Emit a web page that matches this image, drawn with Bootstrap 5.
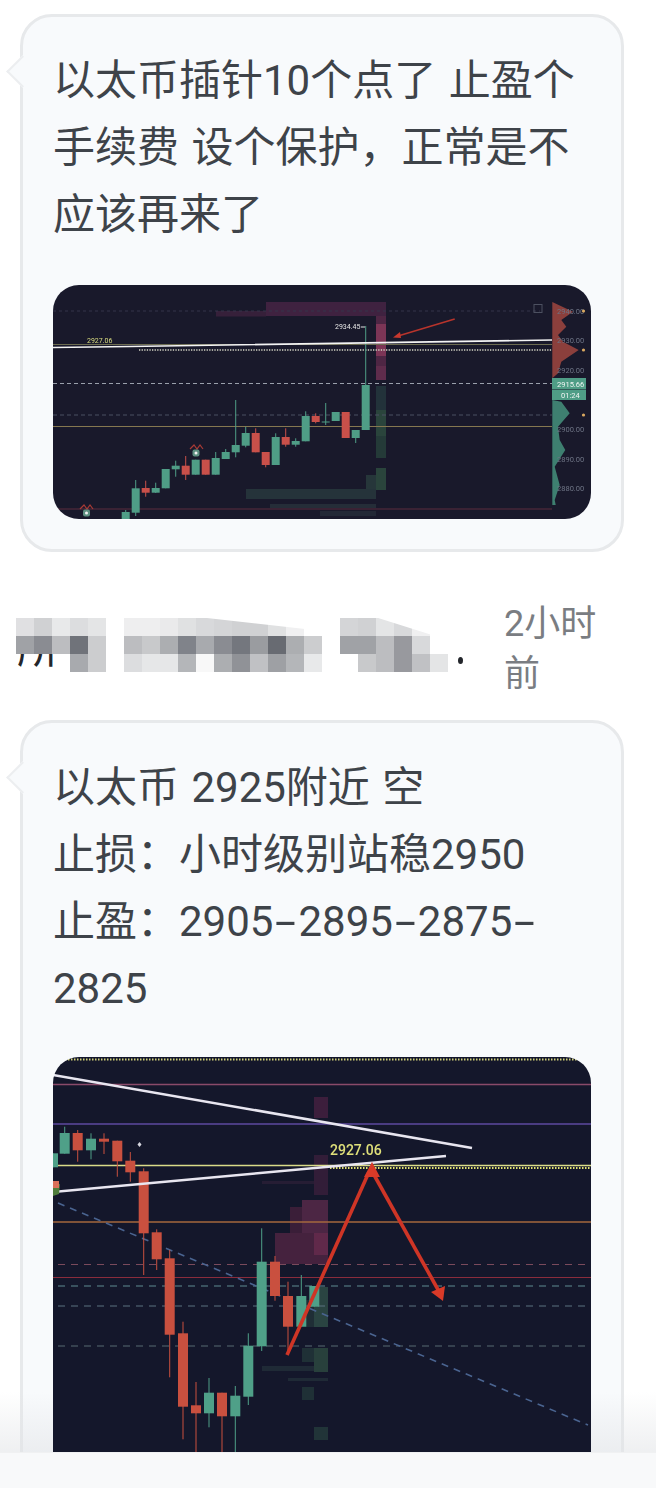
<!DOCTYPE html>
<html lang="zh-CN">

<head>
    <meta charset="UTF-8">
    <meta name="viewport" content="width=device-width, initial-scale=1.0">
    <title>以太币</title>
    <link href="https://cdn.jsdelivr.net/npm/bootstrap@5.3.2/dist/css/bootstrap.min.css" rel="stylesheet">
    <style>
        html,
        body {
            height: 1488px;
            overflow: hidden;
        }

        body {
            background-color: #fff;
            font-family: Roboto, "Noto Sans CJK SC", sans-serif;
        }

        .msg-bubble {
            position: relative;
            width: 604px;
            margin-left: 20px;
            background-color: #f8fafc;
            border: 3px solid #e7e9eb;
            border-radius: 32px;
            padding: 30px 30px 30px;
        }

        .msg-bubble::before {
            content: "";
            position: absolute;
            left: -12px;
            top: 43px;
            width: 23px;
            height: 23px;
            background-color: #f8fafc;
            border-left: 2px solid #eceef0;
            border-bottom: 2px solid #eceef0;
            transform: rotate(45deg);
        }

        .msg-text {
            font-size: 42px;
            line-height: 67px;
            word-spacing: 2px;
            color: #3e4349;
            margin-bottom: 37px;
        }

        .wide-dash {
            display: inline-block;
            width: 25px;
            text-align: center;
            transform: scaleX(1.8);
        }

        .chart-box {
            position: relative;
            z-index: 2;
            width: 538px;
            border-radius: 26px;
            overflow: hidden;
        }

        .chart-box svg {
            display: block;
            filter: blur(.4px);
        }

        .chart-box text {
            font-family: Roboto, sans-serif;
        }

        .first-bubble {
            margin-top: 14px;
        }

        .second-bubble {
            margin-top: 21px;
            height: 900px;
            padding-top: 31px;
        }

        .second-bubble .msg-text {
            margin-bottom: 35px;
        }

        .name-row {
            height: 100px;
            margin-top: 47px;
        }

        .name-area {
            position: relative;
            width: 504px;
            height: 100px;
            overflow: hidden;
        }

        .name-text {
            position: absolute;
            left: 17px;
            top: 22px;
            font-size: 42px;
            line-height: 56px;
            color: #23262b;
        }

        .name-dot {
            position: absolute;
            left: 458px;
            top: 58px;
            width: 5px;
            height: 7px;
            border-radius: 50%;
            background-color: #23262b;
        }

        .mosaic {
            position: absolute;
            left: 0;
            top: 0;
        }

        .time-text {
            width: 100px;
            font-size: 36px;
            line-height: 50px;
            color: #7a7d82;
        }

        .bottom-fade {
            position: absolute;
            z-index: 1;
            left: 0;
            right: 0;
            top: 1392px;
            height: 60px;
            background: linear-gradient(rgba(225, 227, 230, 0), rgba(225, 227, 230, .55));
        }

        .bottom-bar {
            position: absolute;
            z-index: 3;
            left: 0;
            right: 0;
            top: 1452px;
            height: 36px;
            background-color: #f8f9fa;
            border-top: 1px solid #f0f1f2;
        }
    </style>
</head>

<body class="position-relative">
    <!-- first post -->
    <div class="msg-bubble first-bubble">
        <div class="msg-text">以太币插针10个点了 止盈个手续费 设个保护，正常是不应该再来了</div>
        <div class="chart-box">
            <svg id="chartOne" width="538" height="234" viewBox="53 285 538 234">
                <rect x="53" y="285" width="538" height="234" fill="#19192b" />
                <!-- heatmap -->
                <g id="heatOne"></g>
                <!-- levels -->
                <line x1="53" x2="540" y1="311" y2="311" stroke="#34344a" stroke-dasharray="3 3" />
                <line x1="53" x2="552" y1="344.5" y2="344.5" stroke="#6d6c52" />
                <line x1="139" x2="552" y1="350" y2="350" stroke="#d5d5c5" stroke-width="1.4" stroke-dasharray="1.3 1.3" />
                <line x1="53" x2="552" y1="383.5" y2="383.5" stroke="#9aa0ac" stroke-dasharray="4 3" />
                <line x1="53" x2="552" y1="415" y2="415" stroke="#4b5162" stroke-dasharray="4 3" />
                <line x1="53" x2="552" y1="426.5" y2="426.5" stroke="#857750" />
                <line x1="53" x2="552" y1="509" y2="509" stroke="#5c2c3e" />
                <g id="candlesOne"></g>
                <!-- trend line -->
                <path d="M53 347.5 L130 346.5 L552 340" fill="none" stroke="#f4f4f4" stroke-width="1.6" />
                <text x="87" y="343" font-size="7" fill="#d9dc80">2927.06</text>
                <text x="335" y="329" font-size="7" fill="#e6e6e6">2934.45</text>
                <line x1="361" x2="365" y1="327" y2="327" stroke="#e6e6e6" />
                <path d="M454.7 319 L398 336" stroke="#b8342c" stroke-width="1.6" />
                <path d="M393 337.5 L400 332 L401 338 Z" fill="#c8382e" />
                <rect x="534" y="304.5" width="8" height="8" fill="none" stroke="#4c5060" />
                <!-- right axis -->
                <path d="M552.3 302 L573 311.7 L561.3 320 L566.3 326.7 L558 335 L563 341.7 L578.7 350 L561.3 361.7 L558 373.3 L552.3 378.3 Z" fill="#8b3f3c" />
                <path d="M552.3 400 L561.3 401.7 L569.7 413.3 L558 426.7 L559.7 440 L565.3 450 L554.7 466.7 L559.7 485 L554.7 500 L555.7 505 L552.3 505 Z" fill="#3e7f70" />
                <g font-size="7.5" fill="#6e7485">
                    <text x="557" y="313.5">2940.00</text>
                    <text x="557" y="343">2930.00</text>
                    <text x="557" y="372.5">2920.00</text>
                    <text x="557" y="432">2900.00</text>
                    <text x="557" y="462">2890.00</text>
                    <text x="557" y="491">2880.00</text>
                </g>
                <rect x="552" y="378" width="34" height="11.5" fill="#4f9d86" />
                <rect x="552" y="390" width="34" height="10" fill="#4f9d86" />
                <text x="557" y="386.5" font-size="7.5" fill="#f0f5f3">2915.66</text>
                <text x="561" y="397.5" font-size="7.5" fill="#f0f5f3">01:24</text>
                <g fill="#d9a860">
                    <circle cx="583.5" cy="311" r="1.6" />
                    <circle cx="583.5" cy="350" r="1.6" />
                    <circle cx="583.5" cy="415" r="1.6" />
                </g>
                <!-- trade markers -->
                <g fill="none" stroke="#a83a35" stroke-width="1.2">
                    <path d="M190 449 L194 445 L197 449 L200 445 L203 449" />
                    <path d="M80 509 L84 505 L87 509 L90 505 L93 509" />
                </g>
                <g>
                    <rect x="192.5" y="449.5" width="7" height="7" rx="2" fill="#5d8f80" />
                    <circle cx="196" cy="453" r="1.5" fill="#f2f2f2" />
                    <rect x="83" y="509.5" width="7" height="7" rx="2" fill="#5d8f80" />
                    <circle cx="86.5" cy="513" r="1.5" fill="#f2f2f2" />
                </g>
            </svg>
        </div>
    </div>

    <!-- author row, name is pixelated in the picture -->
    <div class="d-flex name-row">
        <div class="name-area">
            <span class="name-text">所</span>
            <span class="name-dot"></span>
            <svg id="mosaic" class="mosaic" width="504" height="100" viewBox="0 596 504 100"></svg>
        </div>
        <div class="time-text">2小时前</div>
    </div>

    <!-- second post -->
    <div class="msg-bubble second-bubble">
        <div class="msg-text">以太币 2925附近 空<br>止损：小时级别站稳2950<br>止盈：2905<span class="wide-dash">-</span>2895<span class="wide-dash">-</span>2875<span class="wide-dash">-</span>2825</div>
        <div class="chart-box">
            <svg id="chartTwo" width="538" height="440" viewBox="53 1057 538 440">
                <rect x="53" y="1057" width="538" height="440" fill="#14172b" />
                <g id="heatTwo"></g>
                <!-- levels -->
                <line x1="53" x2="591" y1="1059.5" y2="1059.5" stroke="#cfd07a" stroke-width="2" stroke-dasharray="1.5 1.5" />
                <line x1="53" x2="591" y1="1084.5" y2="1084.5" stroke="#8a4a6a" stroke-width="1.4" />
                <line x1="53" x2="591" y1="1124" y2="1124" stroke="#5d4aa0" stroke-width="1.6" />
                <line x1="53" x2="591" y1="1165.5" y2="1165.5" stroke="#d9db88" stroke-width="1.4" />
                <line x1="330" x2="591" y1="1168" y2="1168" stroke="#e2e270" stroke-width="2" stroke-dasharray="1.5 1.5" />
                <line x1="53" x2="591" y1="1222" y2="1222" stroke="#a5683e" stroke-width="1.6" />
                <line x1="58" x2="591" y1="1264.5" y2="1264.5" stroke="#7a4a5c" stroke-dasharray="7 6" />
                <line x1="53" x2="591" y1="1277.5" y2="1277.5" stroke="#8a2c3c" />
                <line x1="58" x2="591" y1="1286" y2="1286" stroke="#5f8c92" stroke-width="1.2" stroke-dasharray="7 6" />
                <line x1="58" x2="591" y1="1306" y2="1306" stroke="#5a7280" stroke-dasharray="7 6" />
                <line x1="58" x2="591" y1="1346" y2="1346" stroke="#576a72" stroke-dasharray="7 6" />
                <line x1="58" x2="588" y1="1203" y2="1425" stroke="#4a6490" stroke-width="1.6" stroke-dasharray="7 6" />
                <g id="candlesTwo"></g>
                <!-- trend lines -->
                <line x1="53" x2="472" y1="1075" y2="1148" stroke="#e8e6f0" stroke-width="2.6" />
                <line x1="53" x2="446" y1="1192" y2="1156" stroke="#e8e6f0" stroke-width="2.6" />
                <path d="M53 1186 L60 1184 L59 1194 L53 1196 Z" fill="#4f7d3c" />
                <rect x="53" y="1181" width="6" height="7" fill="#d9705a" />
                <path d="M139.5 1142 L141.5 1144.5 L139.5 1147 L137.5 1144.5 Z" fill="#d8d8e0" />
                <text x="330" y="1155" font-size="14" font-weight="500" fill="#dfe07a">2927.06</text>
                <!-- red arrows -->
                <path d="M287 1355 L369 1172" fill="none" stroke="#cf3526" stroke-width="3.6" />
                <path d="M373 1173 L441 1295" fill="none" stroke="#cf3526" stroke-width="3.6" />
                <path d="M372 1162 L380 1177 L364 1177 Z" fill="#d93a28" />
                <path d="M443 1301 L431 1292 L445 1286 Z" fill="#d93a28" />
            </svg>
        </div>
    </div>

    <div class="bottom-fade"></div>
    <div class="bottom-bar"></div>

    <script>
        const NS = 'http://www.w3.org/2000/svg';

        function addRect(parent, x, y, w, h, fill) {
            const r = document.createElementNS(NS, 'rect');
            r.setAttribute('x', x);
            r.setAttribute('y', y);
            r.setAttribute('width', w);
            r.setAttribute('height', h);
            r.setAttribute('fill', fill);
            parent.appendChild(r);
        }

        // [x, bodyTop, bodyBottom, wickTop, wickBottom, color]
        function drawCandles(id, list, w, green, red) {
            const g = document.getElementById(id);
            list.forEach(c => {
                const col = c[5] === 'g' ? green : red;
                addRect(g, c[0] - 0.5, c[3], 1, c[4] - c[3], col);
                addRect(g, c[0] - w / 2, c[1], w, c[2] - c[1], col);
            });
        }

        const candlesOne = [
            [125.7, 512, 519, 510, 519, 'g'], [135.7, 488.3, 512.7, 480, 516, 'g'], [145.7, 488, 492.7, 480.7, 496.7, 'r'],
            [155.7, 488, 492.7, 482.7, 493, 'g'], [165.7, 469, 488.3, 469, 488.3, 'g'], [175.7, 465.7, 469.3, 460.7, 476.7, 'g'],
            [185.7, 465.7, 474.7, 456, 480, 'r'], [195.7, 459.7, 474.7, 459.7, 474.7, 'g'], [205.7, 459.7, 474.7, 459.7, 474.7, 'r'],
            [215.7, 458, 474.7, 452, 474.7, 'g'], [225.7, 452, 459, 449, 459, 'g'], [235.7, 445, 452.3, 400, 457.3, 'g'],
            [245.7, 433, 445.7, 426.7, 447.3, 'g'], [255.7, 433, 452.3, 428.3, 452.3, 'r'], [265.7, 452, 465, 452, 467.3, 'r'],
            [275.7, 437, 465, 433.3, 465, 'g'], [285.7, 437, 444.7, 428.3, 446.7, 'r'], [295.7, 441, 444.7, 438.3, 446.7, 'g'],
            [305.7, 416, 441.3, 411.3, 441.3, 'g'], [315.7, 416, 422, 413.3, 423.3, 'r'], [325.7, 421.5, 422.5, 403, 425, 'g'],
            [335.7, 412, 421, 412, 421, 'g'], [345.7, 412, 438, 412, 438, 'r'], [355.7, 430, 438, 430, 443, 'g'],
            [365.7, 385, 430, 326, 385, 'g']
        ];
        drawCandles('candlesOne', candlesOne, 8, '#4f9d86', '#c9504a');

        const candlesTwo = [
            [53, 1153.3, 1167.3, 1153.3, 1167.3, 'g'], [64.7, 1133, 1153.7, 1126.7, 1153.7, 'g'], [77.7, 1133, 1150.3, 1130, 1161.7, 'r'],
            [91, 1138.7, 1150.3, 1133.3, 1159.3, 'g'], [104, 1138.7, 1141.7, 1133.3, 1154, 'r'], [117.3, 1140.7, 1161.3, 1140.7, 1176.7, 'r'],
            [130.3, 1160.7, 1172.3, 1152, 1181.7, 'r'], [143.7, 1171.3, 1233.3, 1168.3, 1275, 'r'], [156.7, 1232.3, 1259.3, 1229.3, 1270, 'r'],
            [169.7, 1258.3, 1334.7, 1250, 1377.3, 'r'], [183, 1333.3, 1406.7, 1321.7, 1439.3, 'r'], [196, 1405.3, 1413.3, 1382, 1453, 'r'],
            [209, 1392.7, 1413.3, 1378, 1427.3, 'g'], [222, 1392.7, 1416.3, 1392.7, 1453, 'r'], [235.3, 1395.7, 1416.3, 1386, 1453, 'g'],
            [248.3, 1345.7, 1396.7, 1333.3, 1405, 'g'], [261.7, 1261.7, 1346.3, 1228.3, 1351, 'g'], [275, 1261.7, 1296, 1256, 1300.7, 'r'],
            [288, 1296, 1326.7, 1281.7, 1353.3, 'r'], [301.3, 1296, 1326.7, 1275, 1326.7, 'g'], [314.3, 1286, 1306.7, 1286, 1306.7, 'g']
        ];
        drawCandles('candlesTwo', candlesTwo, 10, '#4fa088', '#c9503f');

        // [x, y, w, h, color]
        const heatOne = [
            [266, 302, 120, 14, '#3f2240'], [216, 311, 50, 5.5, '#36203a'], [376, 316, 10, 8, '#4e2644'], [376, 324, 10, 32, '#7c3556'],
            [376, 356, 10, 10, '#4e2644'], [376, 366, 10, 14, '#5f2c4c'], [376, 386, 10, 26, '#22323a'], [376, 410, 10, 26, '#2a443c'],
            [376, 436, 10, 22, '#243a38'], [376, 468, 10, 22, '#2a443c'], [366, 475, 10, 24, '#26363a'], [246, 489, 130, 10, '#25333a'],
            [270, 504, 106, 4, '#252d38'], [320, 511, 56, 5, '#222836']
        ];
        const heatTwo = [
            [314, 1097, 14, 21, '#3c1e3c'], [314, 1155, 14, 40, '#321d38'], [302, 1200, 26, 34, '#4c2644'], [290, 1207, 12, 26, '#3a1e38'],
            [275, 1233, 53, 31, '#45223e'], [314, 1233, 14, 22, '#60294a'], [262, 1181, 52, 3, '#261d34'], [314, 1287, 14, 40, '#2a4442'],
            [302, 1300, 12, 27, '#1f2e36'], [302, 1348, 12, 14, '#1f3036'], [314, 1348, 14, 24, '#28403c'], [262, 1366, 52, 5, '#1f2a36'],
            [288, 1378, 40, 3, '#1f2a36'], [302, 1387, 12, 13, '#1f3036'], [314, 1427, 14, 13, '#213438']
        ];
        heatOne.forEach(b => addRect(document.getElementById('heatOne'), ...b));
        heatTwo.forEach(b => addRect(document.getElementById('heatTwo'), ...b));

        // pixelated name, three rows of 18px cells
        const mosaicGroups = [
            [16, [['#e0e0e2', '#d0d1d3', '#e8e9ea', '#dcdddf', '#e4e5e6'],
                ['#a0a2a6', '#8a8c92', '#bcbdc0', '#70737a', '#cccdcf'],
                [null, null, null, '#a8aaae', '#cccdcf']]],
            [124, [['#eeeeef', '#eeeeef', '#eaeaeb', '#e0e1e2', '#d8d9db', '#d4d5d7', '#d0d1d3', '#d0d1d3', '#e0e1e2', '#f0f0f1', null],
                ['#bcbdc0', '#c8c9cb', '#acaeb1', '#80838a', '#a8aaae', '#8a8c92', '#74777e', '#9a9ca0', '#686b72', '#acaeb1', '#cccdcf'],
                ['#dcdddf', '#e6e7e8', '#e6e7e8', '#b4b6b9', '#f8f8f8', '#acaeb1', '#909297', '#c0c1c4', '#9ea0a4', '#b4b6b9', '#e8e9ea']]],
            [340, [['#d4d5d7', '#d0d1d3', '#e4e5e6', '#d8d9db', '#f0f0f1', null],
                ['#a0a2a6', '#a0a2a6', '#bcbdc0', '#98999e', '#d8d9db', null],
                [null, '#c8c9cb', '#bcbdc0', '#98999e', '#c0c1c4', '#e4e5e6']]]
        ];
        const mosaic = document.getElementById('mosaic');
        mosaicGroups.forEach(group => {
            group[1].forEach((row, r) => {
                row.forEach((col, i) => {
                    if (col) addRect(mosaic, group[0] + i * 18, 615 + r * 18, 18, 18, col);
                });
            });
        });
        // the slanted white edges the retouch left over the cells
        [
            '198,614 324,614 324,633 305,626',
            '375,614 450,614 432,632'
        ].forEach(pts => {
            const p = document.createElementNS(NS, 'polygon');
            p.setAttribute('points', pts);
            p.setAttribute('fill', '#fff');
            mosaic.appendChild(p);
        });
    </script>
    <script src="https://cdn.jsdelivr.net/npm/bootstrap@5.3.2/dist/js/bootstrap.bundle.min.js"></script>
</body>

</html>
